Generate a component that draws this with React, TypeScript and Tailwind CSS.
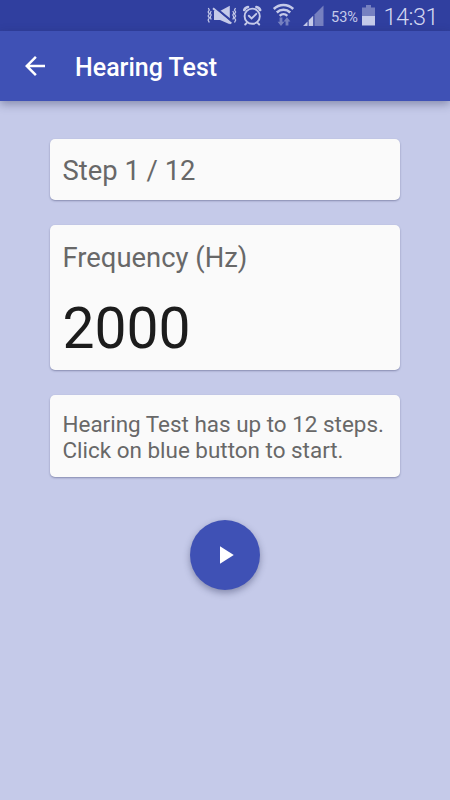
import type { ReactNode } from 'react';

function StatusIcons() {
  return (
    <svg className="h-[31px] w-[178px] shrink-0" viewBox="200 0 178 31" fill="none">
      {/* vibrate / muted speaker */}
      <g stroke="#c5cae9" strokeWidth="1.2">
        <path d="M208.300 8l1 2-1.200 2 1.200 2-1.200 2 1.200 2-1.200 2 1.200 2.500M211.200 11l-1 2 1 2-1 2 1 2.500" />
        <path d="M235.500 8l-1 2 1.200 2-1.200 2 1.200 2-1.200 2 1.200 2-1.200 2.500M232.800 11l1 2-1 2 1 2-1 2.500" />
      </g>
      <path d="M214 11h6l9.800-5.200v18.400L220 20h-6z" fill="#c5cae9" />
      <path d="M213.500 6.300l18.500 15.200" stroke="#303f9f" strokeWidth="2.300" />
      <path d="M213 8.200l18.300 15.300" stroke="#c5cae9" strokeWidth="2" />
      {/* alarm */}
      <g stroke="#c5cae9" strokeWidth="1.900" strokeLinecap="round">
        <circle cx="252.200" cy="16.200" r="7.600" />
        <path d="M248.800 15.800l2.800 2.700 4.700-4.700M246.800 22.800l-1.600 1.700M257.600 22.800l1.600 1.700" />
        <path d="M244.300 10a4.500 4.500 0 0 1 3.700-3M260.100 10a4.500 4.500 0 0 0-3.700-3" strokeWidth="2.600" />
      </g>
      {/* wifi */}
      <g stroke="#c5cae9" strokeWidth="2.500">
        <path d="M273.800 9a14 14 0 0 1 19.400 0" />
        <path d="M276.800 12.500a9.600 9.600 0 0 1 13.400 0" />
        <path d="M279.700 15.800a5.500 5.500 0 0 1 7.600 0" />
      </g>
      <g fill="#7680c0">
        <path d="M279.600 17.500h2.800v4.300h2l-3.400 4.200-3.400-4.200h2z" />
        <path d="M285.600 25.500h2.800v-4h2l-3.400-4.200-3.400 4.200h2z" />
      </g>
      {/* signal */}
      <path d="M303 26l4.500-4.500V26zM308.700 26v-5.700l4.500-4.500V26z" fill="#c5cae9" />
      <path d="M314.500 26V14.500l9-9V26z" fill="#7680c0" />
      {/* battery */}
      <path d="M362 7.500h4V5h5v2.500h4V16h-13z" fill="#7680c0" />
      <path d="M362 16h13v9.500h-13z" fill="#c5cae9" />
      <text x="331" y="21.800" fill="#c5cae9" fontSize="14.500" fontFamily="Roboto, sans-serif" textLength="27" lengthAdjust="spacingAndGlyphs">53%</text>
    </svg>
  );
}

function Card({ children, className }: { children: ReactNode; className: string }) {
  return (
    <section className={`w-[350px] rounded-[5px] bg-[#fafafa] px-[12.5px] text-[#686868] shadow-[0_1px_2px_rgba(40,45,90,0.4)] ${className}`}>
      {children}
    </section>
  );
}

export default function App() {
  return (
    <div className="flex h-[800px] w-[450px] flex-col overflow-hidden bg-[#c5cae9] font-[Roboto,sans-serif]">
      <div className="flex h-[31px] shrink-0 items-start bg-[#303f9f] pl-[200px]">
        <StatusIcons />
        <span className="ml-[5.5px] mt-[2px] text-[23.5px] leading-[31px] font-light tracking-[-0.5px] whitespace-nowrap text-[#d3d7f0]">14:31</span>
      </div>
      <header className="flex h-[70px] shrink-0 items-center bg-[#3f51b5] pl-[20px] text-white shadow-[0_3px_9px_rgba(35,40,80,0.4)]">
        <svg className="size-[30px]" viewBox="0 0 24 24" fill="currentColor" aria-label="Back">
          <path d="M20 11H7.830l5.590-5.590L12 4l-8 8 8 8 1.410-1.410L7.830 13H20z" />
        </svg>
        <h1 className="ml-[25px] mt-[4px] text-[25px] leading-[30px] font-medium">Hearing Test</h1>
      </header>
      <main className="flex flex-col items-center pt-[38px]">
        <Card className="h-[61px] pt-[15px]">
          <p className="text-[27.4px] leading-[34px]">Step 1 / 12</p>
        </Card>
        <Card className="mt-[25px] h-[145px] pt-[16px]">
          <p className="text-[27.4px] leading-[34px]">Frequency (Hz)</p>
          <p className="mt-[21px] text-[57px] leading-[66px] text-[#1c1c1c]">2000</p>
        </Card>
        <Card className="mt-[25px] h-[82px] pt-[16px]">
          <p className="text-[22.45px] leading-[26px] whitespace-nowrap">Hearing Test has up to 12 steps.<br />Click on blue button to start.</p>
        </Card>
        <button aria-label="Start" className="mt-[43.4px] flex size-[70px] items-center justify-center rounded-full bg-[#3f51b5] text-white shadow-[0_3px_7px_rgba(35,40,80,0.4)]">
          <svg className="size-[30px]" viewBox="0 0 24 24" fill="currentColor">
            <path d="M8 5v14l11-7z" />
          </svg>
        </button>
      </main>
    </div>
  );
}
